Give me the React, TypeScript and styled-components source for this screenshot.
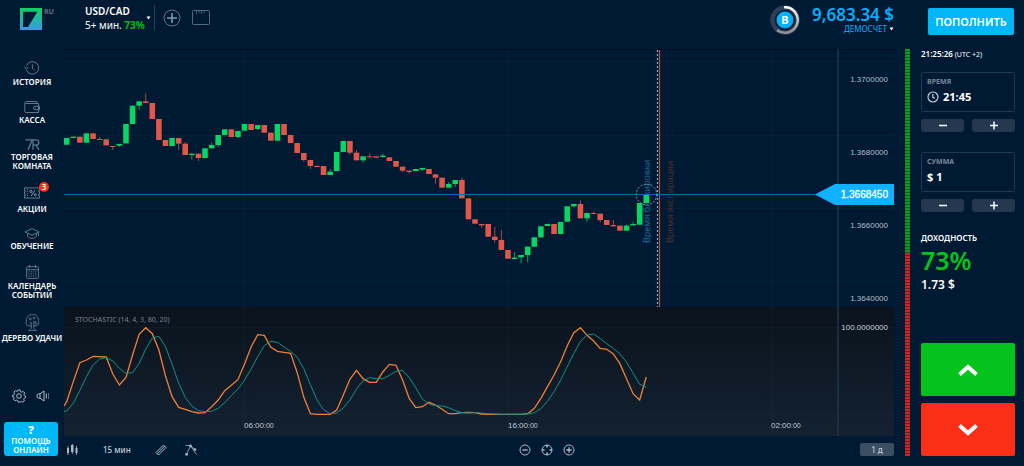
import React from "react";
import styled, { createGlobalStyle } from "styled-components";

const GlobalStyle = createGlobalStyle`
  *, *::before, *::after { box-sizing: border-box; }
  body {
    margin: 0;
    background: #001a33;
    color: #fff;
    font-family: "Noto Sans", "Open Sans", sans-serif;
  }
  button, input { font: inherit; color: inherit; margin: 0; padding: 0; border: 0; background: none; }
  button { cursor: pointer; }
  svg { display: block; flex: none; }
`;

const Page = styled.div`
  display: grid;
  grid-template-columns: 64px minmax(0, 1fr) 130px;
  grid-template-rows: 49px auto;
  min-height: 100vh;
`;

/* ---------- header ---------- */

const LogoCell = styled.a`
  display: flex;
  align-items: flex-start;
  gap: 2px;
  padding: 8px 0 0 20px;
  color: #5f7186;
  text-decoration: none;
  font-size: 7px;
  font-weight: 700;
  line-height: 8px;
`;

const HeaderBar = styled.header`
  display: flex;
  justify-content: space-between;
  align-items: flex-start;
  padding-top: 5px;
`;

const HeaderGroup = styled.div<{ $gap: number }>`
  display: flex;
  align-items: center;
  gap: ${(p) => p.$gap}px;
`;

const PairButton = styled.button`
  display: flex;
  align-items: center;
  gap: 1px;
  height: 25px;
  padding: 0 3px 0 21px;
  border-right: 1px solid #2a3f56;
  text-align: left;
`;

const PairText = styled.span`
  display: flex;
  flex-direction: column;
  font-size: 10px;
  line-height: 14px;
`;

const PairName = styled.strong`
  font-weight: 600;
`;

const Profit = styled.span`
  color: #04b81f;
  font-weight: 700;
`;

const IconButton = styled.button`
  display: flex;
  align-items: center;
  justify-content: center;
  color: #aeb9c5;
`;

const AccountButton = styled.button`
  display: flex;
  flex-direction: column;
  align-items: flex-end;
  color: #00b0fb;
`;

const Balance = styled.span`
  font-size: 17px;
  font-weight: 600;
  line-height: 17px;
`;

const AccountKind = styled.span`
  display: flex;
  align-items: center;
  gap: 2px;
  font-size: 8px;
  line-height: 12px;
`;

const DepositCell = styled.div`
  padding: 8px 10px 0 34px;
`;

const DepositButton = styled.button`
  width: 100%;
  height: 27px;
  border-radius: 2px;
  background: #00b7f8;
  font-size: 11px;
  font-weight: 600;
  line-height: 16px;
`;

/* ---------- sidebar ---------- */

const Sidebar = styled.nav`
  display: flex;
  flex-direction: column;
  padding: 12px 0 10px;
`;

const NavList = styled.div`
  display: flex;
  flex-direction: column;
  gap: 15px;
`;

const NavLink = styled.a`
  display: flex;
  flex-direction: column;
  align-items: center;
  gap: 2px;
  color: #fff;
  text-align: center;
  text-decoration: none;
  white-space: pre-line;
  font-size: 8px;
  font-weight: 600;
  line-height: 9px;
`;

const NavIcon = styled.span`
  position: relative;
  color: #63768a;
`;

const Badge = styled.span`
  position: absolute;
  top: -3px;
  right: -9px;
  width: 10px;
  height: 10px;
  border-radius: 50%;
  background: #fb2e16;
  color: #fff;
  font-size: 8px;
  line-height: 10px;
`;

const SidebarFooter = styled.div`
  display: flex;
  flex-direction: column;
  gap: 19px;
  margin-top: auto;
  padding: 0 6px 0 4px;
`;

const QuickSettings = styled.div`
  display: flex;
  gap: 10px;
  padding-left: 8px;
`;

const HelpButton = styled.button`
  display: flex;
  flex-direction: column;
  align-items: center;
  padding: 2px 0;
  border-radius: 3px;
  background: #00b7f8;
  font-size: 8px;
  font-weight: 600;
  line-height: 9px;
  white-space: pre-line;
`;

const HelpMark = styled.strong`
  font-size: 11px;
  line-height: 12px;
`;

/* ---------- chart ---------- */

const ChartColumn = styled.main`
  display: flex;
  flex-direction: column;
`;

const ChartSvg = styled.svg`
  width: 100%;
  height: auto;
  font-family: "Liberation Sans", Arial, sans-serif;
`;

const ChartToolbar = styled.div`
  display: grid;
  grid-template-columns: 10fr auto 7fr;
  align-items: center;
  height: 27px;
  color: #c3cdd8;
`;

const ToolGroup = styled.div<{ $gap: number }>`
  display: flex;
  align-items: center;
  gap: ${(p) => p.$gap}px;
`;

const PeriodButton = styled.button`
  font-size: 8px;
  font-weight: 500;
  line-height: 12px;
`;

const RangeButton = styled(PeriodButton)`
  justify-self: end;
  width: 34px;
  height: 13px;
  border-radius: 2px;
  background: #3b4e63;
`;

/* ---------- trade panel ---------- */

const TradeColumn = styled.aside`
  display: flex;
  align-items: stretch;
  gap: 11px;
  padding: 0 9px 10px 11px;
`;

const SentimentBar = styled.div`
  display: flex;
  flex-direction: column;
  width: 5px;
`;

const SentimentPart = styled.div<{ $share: number; $on: string; $off: string }>`
  flex: ${(p) => p.$share};
  background: repeating-linear-gradient(
    to bottom,
    ${(p) => p.$on} 0 2px,
    ${(p) => p.$off} 2px 3px
  );
`;

const TradeForm = styled.form`
  display: flex;
  flex: 1;
  flex-direction: column;
  min-width: 0;
`;

const Clock = styled.div`
  font-size: 7px;
  line-height: 9px;
  margin-bottom: 13px;
  white-space: nowrap;
`;

const ClockTime = styled.strong`
  font-size: 8px;
  font-weight: 600;
`;

const Field = styled.label`
  display: flex;
  flex-direction: column;
  gap: 3px;
  height: 40px;
  padding: 4px 5px;
  border: 1px solid #23384f;
  border-radius: 3px;
`;

const FieldName = styled.span`
  color: #76879a;
  font-size: 7px;
  font-weight: 700;
  line-height: 10px;
`;

const FieldRow = styled.span`
  display: flex;
  align-items: center;
  gap: 4px;
`;

const FieldInput = styled.input`
  width: 100%;
  min-width: 0;
  height: 14px;
  outline: none;
  font-size: 11px;
  font-weight: 700;
  line-height: 14px;
`;

const Stepper = styled.div`
  display: grid;
  grid-template-columns: 1fr 1fr;
  gap: 8px;
  margin: 7px 0 20px;
`;

const StepButton = styled.button`
  display: flex;
  align-items: center;
  justify-content: center;
  height: 13px;
  border-radius: 3px;
  background: #24384f;
`;

const PayoutLabel = styled.div`
  font-size: 8px;
  font-weight: 600;
  line-height: 12px;
`;

const PayoutRate = styled.div`
  color: #04c31d;
  font-size: 25px;
  font-weight: 600;
  line-height: 32px;
`;

const PayoutSum = styled.div`
  font-size: 12px;
  font-weight: 600;
  line-height: 18px;
`;

const TradeButtons = styled.div`
  display: flex;
  flex-direction: column;
  gap: 7px;
  margin-top: auto;
`;

const TradeButton = styled.button<{ $color: string }>`
  display: flex;
  align-items: center;
  justify-content: center;
  height: 53px;
  border-radius: 2px;
  background: ${(p) => p.$color};
`;

/* ---------- data ---------- */

/* Vertical positions are in ticks, three to one unit of the chart. */
const TICK = 3;
const PITCH = 6.586;
const candleX = (i: number) => 2.7 + i * PITCH;

/* [direction, body top, body bottom, wick top, wick bottom] */
type Candle = [1 | 0, number, number, number?, number?];

const candles: Candle[] = [
  [1, 267, 287], [1, 263, 267], [0, 263, 281], [1, 253, 281], [0, 253, 270],
  [0, 270, 273, 264], [0, 271, 289], [0, 291, 294, 291, 303], [1, 285, 290, 285, 293], [1, 225, 283],
  [1, 170, 225], [1, 157, 170, 157, 182], [0, 157, 162, 133], [0, 162, 210], [0, 210, 273],
  [0, 273, 291], [1, 267, 291], [0, 267, 284, 267, 303], [0, 284, 318, 279], [1, 314, 318, 314, 332],
  [0, 314, 327, 314, 336], [1, 298, 327], [1, 288, 298, 281], [1, 258, 288, 258, 294], [1, 241, 258],
  [0, 241, 264], [1, 246, 264, 246, 267], [1, 225, 245], [0, 225, 243], [1, 228, 240, 228, 243],
  [0, 228, 251], [0, 251, 275], [1, 225, 275], [0, 225, 258], [0, 258, 282],
  [0, 282, 312], [0, 312, 333, 312, 338], [0, 333, 351, 333, 360], [0, 351, 354, 348], [0, 351, 378],
  [1, 368, 378, 360], [1, 309, 366], [1, 276, 309], [0, 276, 311, 276, 317], [0, 311, 334, 303],
  [1, 322, 334, 322, 340], [0, 322, 325, 313], [0, 322, 326], [1, 320, 324, 314], [0, 325, 336],
  [0, 336, 353], [0, 353, 365, 353, 369], [0, 365, 369, 365, 374], [1, 360, 366], [1, 357, 362, 357, 365],
  [0, 360, 375], [0, 376, 386, 376, 404], [0, 386, 416], [1, 405, 416, 399], [1, 393, 405, 393, 413],
  [0, 393, 448, 386], [0, 448, 511], [0, 511, 524], [0, 525, 529, 525, 537], [0, 525, 563],
  [0, 563, 573, 534, 581], [0, 573, 603, 543], [0, 603, 629], [1, 626, 630, 609], [1, 618, 625, 618, 643],
  [1, 593, 618, 593, 640], [1, 565, 593], [1, 532, 565], [1, 525, 531], [0, 525, 555],
  [1, 519, 555], [1, 472, 518], [1, 465, 472, 465, 475], [0, 465, 508, 454], [1, 492, 508, 492, 518],
  [0, 492, 495, 488], [0, 494, 513, 494, 520], [0, 513, 528], [0, 528, 532, 513], [0, 530, 545],
  [1, 530, 545, 526], [1, 525, 529, 518], [1, 462, 527], [1, 437, 462],
];

const fastLine = [
  305, 245, 188, 180, 169, 170, 171, 222, 255, 232, 165, 103, 83, 101, 150, 228, 290, 322, 328, 335,
  339, 338, 320, 300, 272, 256, 239, 192, 141, 104, 106, 142, 154, 157, 160, 218, 292, 341, 343, 343,
  343, 330, 285, 238, 211, 236, 247, 247, 216, 193, 196, 240, 295, 323, 320, 307, 315, 328, 341, 341,
  338, 337, 338, 342, 343, 343, 343, 343, 343, 343, 341, 325, 295, 260, 225, 185, 137, 98, 83, 106,
  123, 145, 148, 162, 191, 236, 281, 300, 231,
];

const slowLine = [
  333, 310, 271, 230, 195, 177, 173, 183, 205, 220, 218, 190, 148, 114, 109, 140, 193, 249, 292, 318,
  332, 335, 334, 325, 308, 287, 267, 240, 207, 170, 137, 124, 127, 141, 154, 172, 206, 254, 300, 329,
  341, 339, 324, 300, 267, 242, 233, 236, 236, 226, 214, 211, 233, 263, 297, 312, 317, 318, 323, 332,
  338, 339, 338, 339, 341, 342, 343, 343, 343, 343, 342, 338, 326, 304, 275, 240, 200, 160, 125, 105,
  102, 115, 131, 145, 162, 186, 220, 253, 262,
];

const STOCH_BASE = 251;
const linePoints = (start: number, values: number[]) =>
  [`0,${STOCH_BASE + start / TICK}`]
    .concat(values.map((v, i) => `${candleX(i).toFixed(2)},${(STOCH_BASE + v / TICK).toFixed(2)}`))
    .join(" ");

const priceLabels = [
  { y: 30, text: "1.3700000" },
  { y: 103, text: "1.3680000" },
  { y: 176, text: "1.3660000" },
  { y: 249, text: "1.3640000" },
];

const timeLabels = [
  { x: 180, text: "06:00" },
  { x: 444, text: "16:00" },
  { x: 707, text: "02:00" },
];

/* ---------- icons ---------- */

const line = { fill: "none", stroke: "currentColor", strokeWidth: 1 } as const;

const HistoryIcon = () => (
  <svg width="16" height="14" viewBox="0 0 16 14" {...line}>
    <path d="M2.4 8.6A6.3 6.3 0 1 0 2.6 4.6" />
    <path d="M.4 5.6 2.4 8l2-2.2" />
    <path d="M8.4 3.4v4l2 1.6" />
  </svg>
);

const WalletIcon = () => (
  <svg width="16" height="12" viewBox="0 0 16 12" {...line}>
    <path d="M1.6 2.5h12.9v9H2.2a1.4 1.4 0 0 1-1.4-1.4V1.8c0-.8.6-1.3 1.4-1.3h10.6v2" />
    <path d="M15.5 5.2h-4.2a1.7 1.7 0 0 0 0 3.5h4.2z" />
    <path d="M11.5 6.6v.8" />
  </svg>
);

const RoomIcon = () => (
  <svg width="15" height="11" viewBox="0 0 15 11" {...line} strokeWidth="1.3">
    <path d="M.4.9h6.8L3 10.8" />
    <path d="M8 10.8V.9h3.2a2.6 2.6 0 0 1 0 5.2H8M11 6.1l3 4.7" />
  </svg>
);

const PromoIcon = () => (
  <svg width="16" height="17" viewBox="0 -2 16 17" {...line}>
    <path d="M.5.9h15v2.8h-1v1h1v2.6h-1v1h1v2.8H.5V8.300h1v-1h-1V4.700h1v-1h-1z" />
    <path d="M3.600 2v8.600" strokeDasharray="1 1" />
    <g stroke="#8494a6">
      <circle cx="6.900" cy="4.400" r="1.100" />
      <circle cx="11.300" cy="7.800" r="1.100" />
      <path d="M10.900 3.200 7.200 9" />
    </g>
  </svg>
);

const StudyIcon = () => (
  <svg width="16" height="11" viewBox="0 0 16 11" {...line}>
    <path d="M8 .6.9 3.9 8 7.2l7.100-3.300z" />
    <path d="M3.600 5.300v3.200c1.200 1.200 2.700 1.800 4.400 1.800s3.200-.6 4.400-1.800V5.300" />
    <path d="M14.400 4.400v3.800" />
  </svg>
);

const CalendarIcon = () => (
  <svg width="13" height="14" viewBox="0 0 13 14" {...line}>
    <rect x=".6" y="1.700" width="11.800" height="11.700" rx="1" />
    <path d="M.6 4.700h11.800M3.500 0v2.800M9.500 0v2.800" />
    <path d="M2.500 6.900h8M2.500 9h8M2.500 11.100h8" strokeDasharray="1.200 1" />
  </svg>
);

const TreeIcon = () => (
  <svg width="15" height="17" viewBox="0 0 15 17" {...line} strokeWidth=".9">
    <path d="M6.300 11.800H3.600A2.800 2.800 0 0 1 1.700 7 2.900 2.900 0 0 1 3 2.800 3.400 3.400 0 0 1 7.600.9a3.200 3.200 0 0 1 4.600 2.300A2.900 2.900 0 0 1 13.200 7.300a2.700 2.700 0 0 1-2.100 4.500H8.800" />
    <path d="M6.300 8.600v5.600L4.800 15.800M8.800 7v7.200l1.500 1.600M3 16.400h9M6.300 9.600 4.300 8M8.800 8.600l2-1.600" />
    <circle cx="5.300" cy="4.900" r="1" />
    <circle cx="9" cy="4" r=".9" />
    <circle cx="11" cy="9.300" r=".8" />
  </svg>
);

const GearIcon = () => (
  <svg width="14" height="14" viewBox="0 0 14 14" {...line}>
    <path d="M5.900 1h2.200l.4 1.600 1.200.6 1.500-.8 1.500 1.600-.8 1.400.4 1.100 1.200.5v1.700l-1.300.5-.5 1.200.7 1.400-1.500 1.400-1.400-.7-1.100.5L7.900 13H6l-.5-1.500-1.200-.5-1.400.7-1.400-1.400.7-1.500-.5-1.100L.7 7.900V6.100l1.400-.5.5-1.100-.7-1.400 1.500-1.500 1.400.8 1-.5z" />
    <circle cx="7" cy="7" r="2.300" />
  </svg>
);

const SoundIcon = () => (
  <svg width="14" height="14" viewBox="0 0 14 14" {...line}>
    <path d="M4 4.800 8 2v10L4 9.200H2.600C1.600 9.200 1 8.500 1 7s.6-2.200 1.600-2.200zM4 4.800v4.400" />
    <path d="M10.300 4.400v5.200" />
    <path d="M12.500 4v6" strokeOpacity=".5" />
  </svg>
);

const Minus = () => (
  <svg width="10" height="9" viewBox="0 0 10 9" fill="none" stroke="#fff" strokeWidth="1.500">
    <path d="M1 4.500h8" />
  </svg>
);

const Plus = () => (
  <svg width="10" height="9" viewBox="0 0 10 9" fill="none" stroke="#fff" strokeWidth="1.500">
    <path d="M1 4.500h8M5 .5v8" />
  </svg>
);

const Caret = () => (
  <svg width="5" height="4" viewBox="0 0 5 4" fill="#fff">
    <path d="M.5.500h4L2.500 3.500z" />
  </svg>
);

/* ---------- sections ---------- */

const navItems = [
  { icon: <HistoryIcon />, label: "ИСТОРИЯ" },
  { icon: <WalletIcon />, label: "КАССА" },
  { icon: <RoomIcon />, label: "ТОРГОВАЯ\nКОМНАТА" },
  { icon: <PromoIcon />, label: "АКЦИИ", badge: "3" },
  { icon: <StudyIcon />, label: "ОБУЧЕНИЕ" },
  { icon: <CalendarIcon />, label: "КАЛЕНДАРЬ\nСОБЫТИЙ" },
  { icon: <TreeIcon />, label: "ДЕРЕВО УДАЧИ" },
];

const PriceChart = () => (
  <ChartSvg viewBox="0 0 830 387" role="img" aria-label="USD/CAD">
    <defs>
      <linearGradient id="stochFill" x1="0" y1="0" x2="0" y2="1">
        <stop offset="0" stopColor="#0a131c" />
        <stop offset="1" stopColor="#132131" />
      </linearGradient>
    </defs>
    <rect x="0" y="0" width="830" height="1" fill="#000d1e" />
    <rect x="0" y="258" width="830" height="129" fill="url(#stochFill)" />
    <g stroke="#6f8faf" strokeOpacity=".06">
      {[12.5, 86.5, 159.5, 232.5, 278.5, 365.5].map((y) => (
        <path key={y} d={`M0 ${y}H830`} />
      ))}
      {[180.5, 444.5, 708.5].map((x) => (
        <path key={x} d={`M${x} 0V387`} />
      ))}
    </g>
    <path d="M774 0V387" stroke="#20344a" strokeWidth="1.500" />
    <path d="M593.5 1V258" stroke="#5fb6ee" strokeWidth="1.2" strokeDasharray="2 2" />
    <path d="M595.5 1V258" stroke="#b8552f" strokeWidth="1.200" />
    <g fontSize="9" fontFamily="Noto Sans, sans-serif">
      <text transform="translate(586 194) rotate(-90)" fill="#22669b">Время блокировки</text>
      <text transform="translate(609 194) rotate(-90)" fill="#4d2f2c">Время экспирации</text>
    </g>
    {candles.map(([up, top, bottom, high = top, low = bottom], i) => {
      const x = candleX(i);
      return (
        <g key={i} fill={up ? "#07d564" : "#e2574a"}>
          <rect x={x - 0.5} y={high / TICK} width="1" height={(low - high) / TICK} opacity=".75" />
          <rect x={x - 2.8} y={top / TICK} width="5.6" height={(bottom - top) / TICK} />
        </g>
      );
    })}
    <path d="M0 145.500H752" stroke="#0a6aa6" strokeWidth="1.200" />
    <circle cx="582.500" cy="145.500" r="10.300" fill="none" stroke="#8795a5" strokeDasharray="2 1.500" />
    <polygon points="751,145.500 771,135 830,135 830,156 771,156" fill="#12b1ff" />
    <g fontSize="8" fill="#b4bec9" textAnchor="end">
      {priceLabels.map((p) => (
        <text key={p.text} x="824" y={p.y + 3}>{p.text}</text>
      ))}
      <text x="824" y="281" fill="#c9d0d7">100.0000000</text>
    </g>
    <text x="824" y="149" fontSize="10" fill="#fff" stroke="#fff" strokeWidth=".3" textAnchor="end">1.3668450</text>
    <g fontSize="8" fill="#c0c8d1">
      {timeLabels.map((t) => (
        <text key={t.text} x={t.x} y="379">
          {t.text}
          <tspan fontSize="7">:00</tspan>
        </text>
      ))}
    </g>
    <text x="11" y="273" fontSize="7" fill="#7a848e" fontFamily="Noto Sans, sans-serif">STOCHASTIC (14, 4, 3, 80, 20)</text>
    <polyline points={linePoints(318, fastLine)} fill="none" stroke="#f08036" strokeWidth="1.300" />
    <polyline points={linePoints(335, slowLine)} fill="none" stroke="#168f87" strokeWidth="1" />
  </ChartSvg>
);

const App = () => (
  <Page>
    <GlobalStyle />
    <LogoCell href="#">
      <svg width="22" height="22" viewBox="0 0 66 66" aria-hidden="true">
        <defs>
          <linearGradient id="logoFill" x1="0" y1="0" x2="0" y2="1">
            <stop offset="0" stopColor="#0bd45f" />
            <stop offset="1" stopColor="#3b98e8" />
          </linearGradient>
        </defs>
        <rect width="66" height="66" fill="url(#logoFill)" />
        <path d="M9 11h43L24 57H9z" fill="#001a33" />
      </svg>
      RU
    </LogoCell>

    <HeaderBar>
      <HeaderGroup $gap={8}>
        <PairButton type="button">
          <PairText>
            <PairName>USD/CAD</PairName>
            <span>
              5+ мин. <Profit>73%</Profit>
            </span>
          </PairText>
          <Caret />
        </PairButton>
        <HeaderGroup $gap={11}>
          <IconButton type="button" aria-label="Добавить актив">
            <svg width="18" height="18" viewBox="0 0 18 18" fill="none">
              <circle cx="9" cy="9" r="8" stroke="#62748a" />
              <path d="M9 4v10M4 9h10" stroke="#8494a6" strokeWidth="1.600" />
            </svg>
          </IconButton>
          <IconButton type="button" aria-label="Раскладка">
            <svg width="18" height="16" viewBox="0 0 18 16" fill="none" stroke="#55687d">
              <rect x=".5" y=".5" width="17" height="14" rx="1" />
              <path d="M4.500 1v3M7 1v2M9.500 1v3M12 1v2" strokeOpacity=".8" />
            </svg>
          </IconButton>
        </HeaderGroup>
      </HeaderGroup>
      <HeaderGroup $gap={12}>
        <svg width="30" height="30" viewBox="0 0 30 30">
          <defs>
            <linearGradient id="ringFill" x1="0" y1="0" x2="0" y2="1">
              <stop offset="0" stopColor="#ffffff" />
              <stop offset="1" stopColor="#8a8f96" />
            </linearGradient>
          </defs>
          <circle cx="15" cy="15" r="12.500" fill="none" stroke="#2b3f56" strokeWidth="4.500" />
          <path d="M14 2.200A12.800 12.800 0 1 1 7 25" fill="none" stroke="url(#ringFill)" strokeWidth="2.500" />
          <circle cx="15" cy="15" r="8.500" fill="#00b2f7" />
          <text x="15" y="19" fontSize="11" fontWeight="700" fill="#fff" textAnchor="middle">B</text>
        </svg>
        <AccountButton type="button">
          <Balance>9,683.34 $</Balance>
          <AccountKind>
            ДЕМОСЧЕТ <Caret />
          </AccountKind>
        </AccountButton>
      </HeaderGroup>
    </HeaderBar>

    <DepositCell>
      <DepositButton type="button">ПОПОЛНИТЬ</DepositButton>
    </DepositCell>

    <Sidebar>
      <NavList>
        {navItems.map((item) => (
          <NavLink key={item.label} href="#">
            <NavIcon>
              {item.icon}
              {item.badge && <Badge>{item.badge}</Badge>}
            </NavIcon>
            {item.label}
          </NavLink>
        ))}
      </NavList>
      <SidebarFooter>
        <QuickSettings>
          <IconButton type="button" aria-label="Настройки">
            <GearIcon />
          </IconButton>
          <IconButton type="button" aria-label="Звук">
            <SoundIcon />
          </IconButton>
        </QuickSettings>
        <HelpButton type="button">
          <HelpMark>?</HelpMark>
          {"ПОМОЩЬ\nОНЛАЙН"}
        </HelpButton>
      </SidebarFooter>
    </Sidebar>

    <ChartColumn>
      <PriceChart />
      <ChartToolbar>
        <ToolGroup $gap={24}>
          <IconButton type="button" aria-label="Тип графика">
            <svg width="15" height="13" viewBox="0 0 15 13" fill="currentColor">
              <path d="M3 5h2v5H3zM3.600 3h.8v9h-.8zM7 2h2.500v7H7zM7.900 1h.8v10h-.8zM11.500 5h2v5h-2zM12.100 3h.8v9h-.8z" />
            </svg>
          </IconButton>
          <PeriodButton type="button">15 мин</PeriodButton>
          <ToolGroup $gap={18}>
            <IconButton type="button" aria-label="Рисование">
              <svg width="12" height="12" viewBox="0 0 12 12" {...line}>
                <path d="M1 8.500 8.500 1 11 3.500 3.500 11zM2.200 9.700l7.500-7.500" />
              </svg>
            </IconButton>
            <IconButton type="button" aria-label="Индикаторы">
              <svg width="12" height="12" viewBox="0 0 12 12" {...line}>
                <path d="M1.500 10.500 5.500 1.800 10 5.500M.5 1.500l4 0M5.500 1.800 11.500 10.500" strokeWidth=".8" />
                <g fill="currentColor" stroke="none">
                  <circle cx="1.600" cy="10.300" r="1.400" />
                  <circle cx="5.500" cy="1.900" r="1.300" />
                  <circle cx="10" cy="5.500" r="1.300" />
                </g>
              </svg>
            </IconButton>
          </ToolGroup>
        </ToolGroup>
        <ToolGroup $gap={10}>
          <IconButton type="button" aria-label="Уменьшить">
            <svg width="12" height="12" viewBox="0 0 12 12" {...line}>
              <circle cx="6" cy="6" r="5" />
              <path d="M3.300 6h5.400" strokeWidth="1.300" />
            </svg>
          </IconButton>
          <IconButton type="button" aria-label="Центрировать">
            <svg width="12" height="12" viewBox="0 0 12 12" {...line}>
              <circle cx="6" cy="6" r="5" />
              <path d="M6 1v2.500M6 8.500V11M1 6h2.500M8.500 6H11" strokeWidth="1.600" />
            </svg>
          </IconButton>
          <IconButton type="button" aria-label="Увеличить">
            <svg width="12" height="12" viewBox="0 0 12 12" {...line}>
              <circle cx="6" cy="6" r="5" />
              <path d="M3.300 6h5.400M6 3.300v5.400" strokeWidth="1.300" />
            </svg>
          </IconButton>
        </ToolGroup>
        <RangeButton type="button">1 д</RangeButton>
      </ChartToolbar>
    </ChartColumn>

    <TradeColumn>
      <SentimentBar>
        <SentimentPart $share={1} $on="#0a9c22" $off="#065a22" />
        <SentimentPart $share={1} $on="#c42a20" $off="#6b1c22" />
      </SentimentBar>
      <TradeForm onSubmit={(e) => e.preventDefault()}>
        <Clock>
          <ClockTime>21:25:26</ClockTime> (UTC +2)
        </Clock>
        <Field>
          <FieldName>ВРЕМЯ</FieldName>
          <FieldRow>
            <svg width="12" height="12" viewBox="0 0 12 12" fill="none" stroke="#c3cdd8" strokeWidth="1.200">
              <circle cx="6" cy="6" r="5" />
              <path d="M5.800 3v3.300l2.200 1" />
            </svg>
            <FieldInput type="text" defaultValue="21:45" />
          </FieldRow>
        </Field>
        <Stepper>
          <StepButton type="button" aria-label="Раньше"><Minus /></StepButton>
          <StepButton type="button" aria-label="Позже"><Plus /></StepButton>
        </Stepper>
        <Field>
          <FieldName>СУММА</FieldName>
          <FieldInput type="text" defaultValue="$ 1" />
        </Field>
        <Stepper>
          <StepButton type="button" aria-label="Меньше"><Minus /></StepButton>
          <StepButton type="button" aria-label="Больше"><Plus /></StepButton>
        </Stepper>
        <PayoutLabel>ДОХОДНОСТЬ</PayoutLabel>
        <PayoutRate>73%</PayoutRate>
        <PayoutSum>1.73 $</PayoutSum>
        <TradeButtons>
          <TradeButton type="button" $color="#04c31d" aria-label="Выше">
            <svg width="20" height="14" viewBox="0 0 20 14" fill="none" stroke="#fff" strokeWidth="4">
              <path d="M1.500 11.500 10 4l8.500 7.500" />
            </svg>
          </TradeButton>
          <TradeButton type="button" $color="#fb2e16" aria-label="Ниже">
            <svg width="20" height="14" viewBox="0 0 20 14" fill="none" stroke="#fff" strokeWidth="4">
              <path d="M1.500 2.500 10 10l8.500-7.500" />
            </svg>
          </TradeButton>
        </TradeButtons>
      </TradeForm>
    </TradeColumn>
  </Page>
);

export default App;
